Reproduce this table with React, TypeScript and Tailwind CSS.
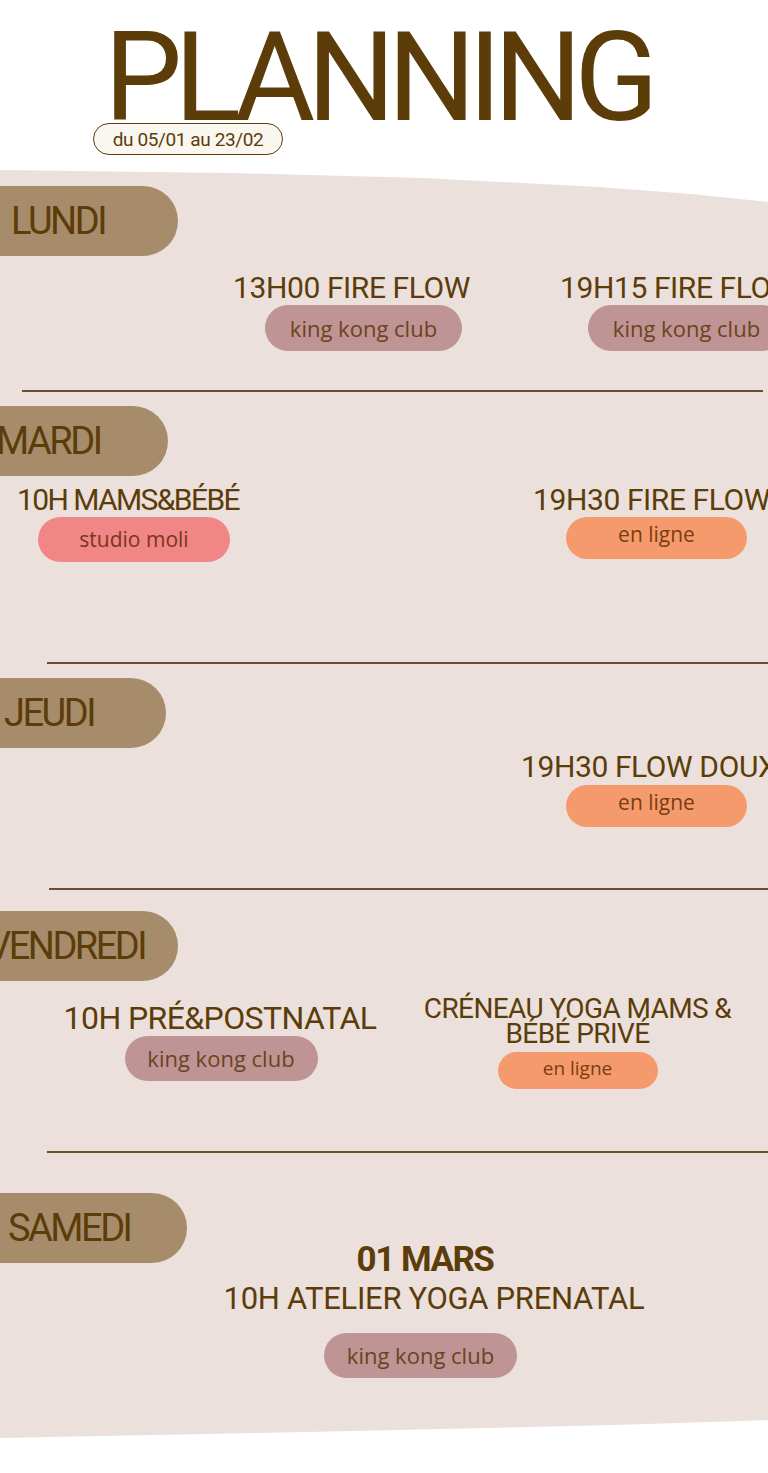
import React from "react";

const SANS = "font-['Roboto','Liberation_Sans',sans-serif]";
const PILLF = "font-['Open_Sans','Noto_Sans',sans-serif]";

function DayPill({ label, cls, textCls }: { label: string; cls: string; textCls: string }) {
  return (
    <div className={`h-[70px] rounded-r-full bg-[#a68c6b] flex items-center overflow-hidden whitespace-nowrap ${cls}`}>
      <span className={`${SANS} text-[38px] leading-none tracking-[-2.5px] text-[#5c3d0a] ${textCls}`}>{label}</span>
    </div>
  );
}

function Title({ children, cls = "tracking-[-0.4px]" }: { children: React.ReactNode; cls?: string }) {
  return (
    <div className={`${SANS} text-[30px] leading-[34px] text-[#5c3d0a] whitespace-nowrap ${cls}`}>{children}</div>
  );
}

function Pill({ children, cls }: { children: React.ReactNode; cls: string }) {
  return (
    <div className={`${PILLF} rounded-full flex items-center justify-center whitespace-nowrap ${cls}`}>{children}</div>
  );
}

function Divider({ cls }: { cls: string }) {
  return <div className={`h-[2px] bg-[#6b4f2c] ${cls}`} />;
}

export default function App() {
  return (
    <div className="w-[768px] h-[1473px] bg-white overflow-hidden">
      {/* header */}
      <div className="pt-[16px]">
        <h1 className={`${SANS} text-[124px] leading-none h-[107px] tracking-[-8px] text-[#5c3d0a] ml-[104px] whitespace-nowrap`}>
          PLANNING
        </h1>
        <div className="ml-[93px] w-[190px] h-[32px] rounded-full border-[1.5px] border-[#5c3d0a] bg-[#faf7f0] flex items-center justify-center">
          <span className={`${SANS} text-[19px] leading-none tracking-[-0.4px] text-[#5c3d0a]`}>du 05/01 au 23/02</span>
        </div>
      </div>

      {/* beige section */}
      <div className="mt-[10px] h-[1280px] bg-[#ebe0dc] overflow-hidden [clip-path:polygon(0_5px,30%_8px,55%_13px,78%_22px,90%_29px,100%_37px,100%_1255px,80%_1260px,40%_1267px,0_1273px)] pt-[21px]">
        {/* LUNDI */}
        <DayPill label="LUNDI" cls="w-[178px]" textCls="ml-[11px]" />
        <div className="flex mt-[15px]">
          <div className="shrink-0 w-[560px] pl-[233px]">
            <Title>13H00 FIRE FLOW</Title>
            <Pill cls="ml-[32px] w-[197px] h-[46px] bg-[#bf9494] text-[22px] text-[#6b4320]">king kong club</Pill>
          </div>
          <div className="shrink-0">
            <Title>19H15 FIRE FLOW</Title>
            <Pill cls="ml-[28px] w-[197px] h-[46px] bg-[#bf9494] text-[22px] text-[#6b4320]">king kong club</Pill>
          </div>
        </div>
        <Divider cls="mt-[39px] ml-[22px] mr-[5px]" />

        {/* MARDI */}
        <DayPill label="MARDI" cls="mt-[14px] w-[168px]" textCls="ml-[-4px]" />
        <div className="flex mt-[7px]">
          <div className="shrink-0 w-[533px] pl-[17px]">
            <Title cls="tracking-[-1.6px]">10H MAMS&amp;BÉBÉ</Title>
            <Pill cls="ml-[21px] w-[192px] h-[45px] bg-[#f08686] text-[21px] text-[#7a3520]">studio moli</Pill>
          </div>
          <div className="shrink-0">
            <Title>19H30 FIRE FLOW</Title>
            <Pill cls="ml-[33px] w-[181px] h-[42px] pb-[6px] bg-[#f49a6c] text-[21px] text-[#7a3d12]">en ligne</Pill>
          </div>
        </div>
        <Divider cls="mt-[100px] ml-[47px]" />

        {/* JEUDI */}
        <DayPill label="JEUDI" cls="mt-[14px] w-[166px]" textCls="ml-[4px]" />
        <div className="flex mt-[2px] pl-[521px]">
          <div className="shrink-0">
            <Title>19H30 FLOW DOUX</Title>
            <Pill cls="mt-[1px] ml-[45px] w-[181px] h-[42px] pb-[6px] bg-[#f49a6c] text-[21px] text-[#7a3d12]">en ligne</Pill>
          </div>
        </div>
        <Divider cls="mt-[61px] ml-[49px]" />

        {/* VENDREDI */}
        <DayPill label="VENDREDI" cls="mt-[21px] w-[178px]" textCls="ml-[-13px]" />
        <div className="flex items-start mt-[15px] h-[93px]">
          <div className="shrink-0 w-[400px] pl-[40px] pt-[5px] flex flex-col items-center">
            <Title cls="text-[32px] leading-[35px] tracking-[-0.6px]">10H PRÉ&amp;POSTNATAL</Title>
            <Pill cls="ml-[2px] w-[193px] h-[45px] bg-[#bf9494] text-[22px] text-[#6b4320]">king kong club</Pill>
          </div>
          <div className="shrink-0 w-[355px] flex flex-col items-center">
            <div className={`${SANS} text-[28px] leading-[25px] tracking-[-0.6px] text-[#5c3d0a] text-center whitespace-nowrap`}>
              CRÉNEAU YOGA MAMS &amp;
              <br />
              BÉBÉ PRIVÉ
            </div>
            <Pill cls="mt-[6px] w-[160px] h-[37px] pb-[5px] bg-[#f49a6c] text-[19px] text-[#7a3d12]">en ligne</Pill>
          </div>
        </div>
        <Divider cls="mt-[62px] ml-[47px]" />

        {/* SAMEDI */}
        <DayPill label="SAMEDI" cls="mt-[40px] w-[187px]" textCls="ml-[8px]" />
        <div className="mt-[-22px] flex flex-col items-center">
          <div className={`${SANS} ml-[82px] text-[35px] leading-[38px] font-bold tracking-[-1.5px] text-[#5c3d0a]`}>01 MARS</div>
          <Title cls="mt-[3px] ml-[100px] text-[31px] tracking-[-0.3px]">10H ATELIER YOGA PRENATAL</Title>
          <Pill cls="mt-[17px] ml-[73px] w-[193px] h-[45px] bg-[#bf9494] text-[22px] text-[#6b4320]">king kong club</Pill>
        </div>
      </div>
    </div>
  );
}
